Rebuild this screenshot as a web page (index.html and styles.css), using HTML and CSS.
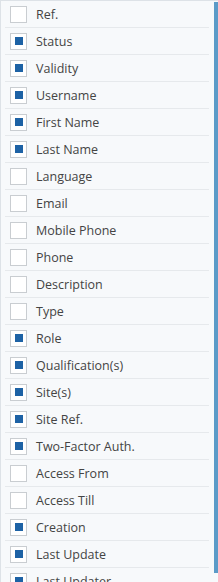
FILE: index.html
```html
<!DOCTYPE html>
<html lang="en">
<head>
    <meta charset="UTF-8">
    <title>Columns</title>
    <link rel="stylesheet" href="styles.css">
</head>
<body>

<div class="panel">
    <ul class="column-list">
        <li class="column-item"><span class="check"></span>Ref.</li>
        <li class="column-item"><span class="check on"></span>Status</li>
        <li class="column-item"><span class="check on"></span>Validity</li>
        <li class="column-item"><span class="check on"></span>Username</li>
        <li class="column-item"><span class="check on"></span>First Name</li>
        <li class="column-item"><span class="check on"></span>Last Name</li>
        <li class="column-item"><span class="check"></span>Language</li>
        <li class="column-item"><span class="check"></span>Email</li>
        <li class="column-item"><span class="check"></span>Mobile Phone</li>
        <li class="column-item"><span class="check"></span>Phone</li>
        <li class="column-item"><span class="check"></span>Description</li>
        <li class="column-item"><span class="check"></span>Type</li>
        <li class="column-item"><span class="check on"></span>Role</li>
        <li class="column-item"><span class="check on"></span>Qualification(s)</li>
        <li class="column-item"><span class="check on"></span>Site(s)</li>
        <li class="column-item"><span class="check on"></span>Site Ref.</li>
        <li class="column-item"><span class="check on"></span>Two-Factor Auth.</li>
        <li class="column-item"><span class="check"></span>Access From</li>
        <li class="column-item"><span class="check"></span>Access Till</li>
        <li class="column-item"><span class="check on"></span>Creation</li>
        <li class="column-item"><span class="check on"></span>Last Update</li>
        <li class="column-item"><span class="check on"></span>Last Updater</li>
    </ul>
    <div class="scroll-track"><div class="scroll-thumb"></div></div>
</div>

</body>
</html>
```

FILE: styles.css
```css
html, body {
    margin: 0;
    padding: 0;
    height: 100%;
    overflow: hidden;
}

body {
    font-family: "Open Sans", "Liberation Sans", sans-serif;
    font-size: 12.5px;
    color: #444;
    background-color: #f7f9fb;
}

.panel {
    display: flex;
    height: 100%;
    border-top: 1px solid #dde2e7;
    border-left: 1px solid #dde2e7;
    box-sizing: border-box;
}

.column-list {
    flex: 1;
    list-style: none;
    margin: 0;
    padding: 0 5px 0 4px;
}

.column-item {
    display: flex;
    align-items: center;
    height: 26px;
    padding-left: 5px;
    border-bottom: 1px solid #e6e9ec;
}

.check {
    width: 15px;
    height: 15px;
    margin-right: 9px;
    border: 1px solid #c9cdd1;
    background-color: #fff;
    display: flex;
    align-items: center;
    justify-content: center;
    flex-shrink: 0;
}

.check.on::after {
    content: "";
    width: 8px;
    height: 8px;
    background-color: #1d62a5;
}

.scroll-track {
    width: 4px;
    padding-top: 1px;
}

.scroll-thumb {
    height: 571px;
    background-color: #5b9bc8;
}
```
